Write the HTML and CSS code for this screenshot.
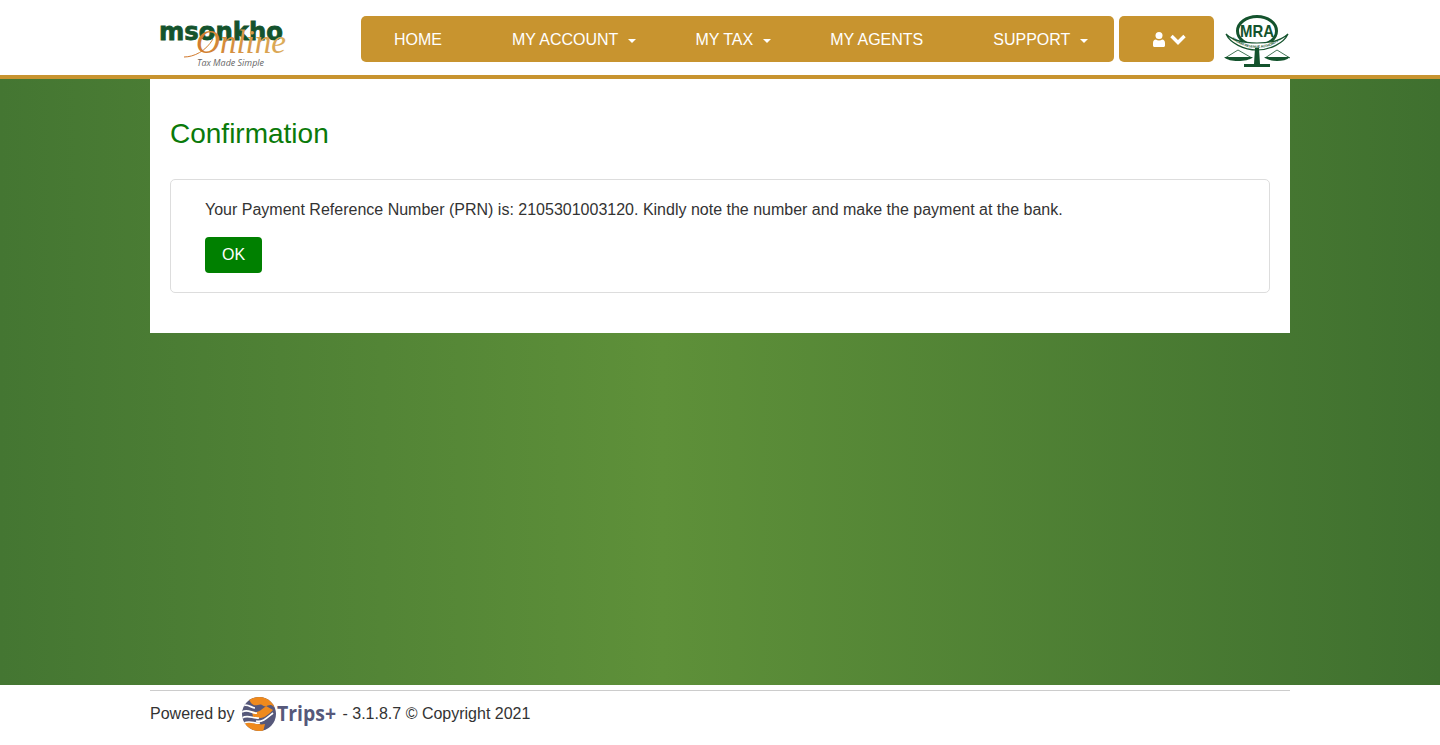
FILE: index.html
```html
<!DOCTYPE html>
<html lang="en">
<head>
  <meta charset="UTF-8" />
  <meta name="viewport" content="width=device-width, initial-scale=1.0" />
  <title>Msonkho Online</title>
  <link rel="stylesheet" href="styles.css">
</head>
<body>

  <!-- Header -->
  <header class="site-header">
    <div class="container header-row">
      <svg class="logo" width="140" height="56" viewBox="0 0 140 56" role="img" aria-label="msonkho Online">
        <defs>
          <linearGradient id="onlineFill" gradientUnits="userSpaceOnUse" x1="34" x2="137" y1="0" y2="0">
            <stop offset="0" stop-color="#cf7427"/>
            <stop offset="1" stop-color="#dcae5c"/>
          </linearGradient>
        </defs>
        <text x="9" y="25" class="logo-main" textLength="124" lengthAdjust="spacingAndGlyphs">msonkho</text>
        <path d="M34 42c10 0 22-6 29-18" fill="none" stroke="url(#onlineFill)" stroke-width="1"/>
        <text x="46" y="38" class="logo-script" textLength="90" lengthAdjust="spacingAndGlyphs" fill="url(#onlineFill)">Online</text>
        <text x="47" y="51" class="logo-tag" textLength="67" lengthAdjust="spacingAndGlyphs">Tax Made Simple</text>
      </svg>

      <nav class="main-nav">
        <a href="#" class="nav-home">HOME</a>
        <a href="#" class="nav-account">MY ACCOUNT<span class="caret"></span></a>
        <a href="#" class="nav-tax">MY TAX<span class="caret"></span></a>
        <a href="#" class="nav-agents">MY AGENTS</a>
        <a href="#" class="nav-support">SUPPORT<span class="caret"></span></a>
      </nav>

      <button class="user-btn" aria-label="User menu">
        <svg width="12" height="16" viewBox="0 0 12 16" fill="#fff">
          <circle cx="6" cy="4.500" r="3.500"/>
          <path d="M1.500 16C.6 16 0 15.400 0 14.500V12c0-2 1.200-3.500 2.800-3.500.9.7 2 1 3.200 1s2.300-.3 3.200-1C10.800 8.500 12 10 12 12v2.500c0 .9-.6 1.500-1.500 1.500z"/>
        </svg>
        <svg width="16" height="11" viewBox="0 0 16 11" fill="none" stroke="#fff" stroke-width="3.400">
          <path d="M1.500 2l6.500 6.500 6.500-6.500"/>
        </svg>
      </button>

      <svg class="mra-logo" width="66" height="52" viewBox="0 0 66 52" role="img" aria-label="MRA">
        <ellipse cx="33" cy="16" rx="19.500" ry="14.500" fill="none" stroke="#14532d" stroke-width="3"/>
        <text x="16" y="22" class="mra-text" textLength="34" lengthAdjust="spacingAndGlyphs">MRA</text>
        <path d="M2 19C6 28 20 35 33 35S60 28 64 19C58 25 46 28 33 28S8 25 2 19z" fill="#fff" stroke="#14532d" stroke-width="1.200"/>
        <path id="mraArc" d="M8 24C15 30 24 33 33 33S51 30 58 24" fill="none"/>
        <text class="mra-small"><textPath href="#mraArc" textLength="50">MALAWI REVENUE AUTHORITY</textPath></text>
        <path d="M1 43L14 35L28 43M41 43L53 35L66 43" fill="none" stroke="#14532d" stroke-width=".8"/>
        <path d="M0 42H29C26 45 20 46 14 46S3 45 0 42zM40 42H66C63 45 58 46 53 46S43 45 40 42z" fill="#14532d"/>
        <path d="M31 33h4l1 16h10v3H20v-3h10z" fill="#14532d"/>
      </svg>
    </div>
  </header>

  <!-- Isi halaman -->
  <main class="page-body">
    <section class="container content">
      <h2 class="page-title">Confirmation</h2>
      <div class="panel">
        <p class="panel-text">Your Payment Reference Number (PRN) is: 2105301003120. Kindly note the number and make the payment at the bank.</p>
        <button class="btn-ok">OK</button>
      </div>
    </section>
  </main>

  <!-- Footer -->
  <footer class="site-footer">
    <div class="container footer-row">
      <span>Powered by</span>
      <svg class="trips-logo" width="104" height="36" viewBox="0 0 104 36" role="img" aria-label="Trips+">
        <defs>
          <clipPath id="globeClip"><circle cx="17" cy="18" r="17"/></clipPath>
        </defs>
        <g clip-path="url(#globeClip)" fill="none" stroke="#fff" stroke-width="1.700">
          <rect width="36" height="36" fill="#56587a" stroke="none"/>
          <path d="M5 0H32V11C27 6 25 13 20 9 17 7 13 12 9 7z" fill="#ef8a1d" stroke="none"/>
          <path d="M10 15C15 18 19 14 24 10L31 14C26 19 20 25 11 21z" fill="#ef8a1d" stroke="none"/>
          <path d="M2 27C9 24 15 30 23 28L21 36H5z" fill="#ef8a1d" stroke="none"/>
          <path d="M0 10C6 7 9 12 13 12"/>
          <path d="M0 16C6 12 10 18 15 17"/>
          <path d="M0 22C6 18 11 23 17 22"/>
          <path d="M2 27C8 24 13 28 18 27"/>
          <path d="M14 25C20 27 26 21 31 17"/>
        </g>
        <text x="35" y="25" class="trips-text" textLength="59" lengthAdjust="spacingAndGlyphs">Trips+</text>
      </svg>
      <span>- 3.1.8.7 © Copyright 2021</span>
    </div>
  </footer>

</body>
</html>
```

FILE: styles.css
```css
* {
  box-sizing: border-box;
}

html, body {
  height: 100%;
}

body {
  margin: 0;
  display: flex;
  flex-direction: column;
  font-family: 'Liberation Sans', Arial, sans-serif;
  font-size: 16px;
  color: #333;
  background: #fff;
}

.container {
  width: 1140px;
  margin: 0 auto;
}

/* Header */
.site-header {
  height: 79px;
  background: #fff;
  border-bottom: 4px solid #c8942f;
  flex-shrink: 0;
}

.header-row {
  display: flex;
  align-items: flex-start;
  height: 75px;
}

.logo {
  margin-top: 15px;
  margin-right: 71px;
  flex-shrink: 0;
}

.logo-main {
  font-family: 'DejaVu Sans', sans-serif;
  font-size: 25px;
  font-weight: 700;
  fill: #14532d;
  stroke: #14532d;
  stroke-width: 0.8px;
}

.logo-script {
  font-family: 'Liberation Serif', serif;
  font-style: italic;
  font-size: 34px;
}

.logo-tag {
  font-family: 'Open Sans', sans-serif;
  font-style: italic;
  font-size: 9px;
  fill: #666;
}

.main-nav {
  display: flex;
  align-items: center;
  width: 753px;
  height: 46px;
  margin-top: 16px;
  padding-top: 2px;
  background: #c8942f;
  border-radius: 5px;
}

.main-nav a {
  color: #fff;
  text-decoration: none;
  white-space: nowrap;
}

.nav-home { margin-left: 33px; }
.nav-account { margin-left: 70px; }
.nav-tax { margin-left: 59px; }
.nav-agents { margin-left: 59px; }
.nav-support { margin-left: 70px; }

.caret {
  display: inline-block;
  width: 0;
  height: 0;
  margin-left: 10px;
  vertical-align: middle;
  border-top: 4px solid #fff;
  border-left: 4px solid transparent;
  border-right: 4px solid transparent;
}

.user-btn {
  display: flex;
  align-items: center;
  gap: 5px;
  width: 95px;
  height: 46px;
  margin-top: 16px;
  margin-left: 5px;
  padding: 0 0 0 34px;
  border: none;
  border-radius: 5px;
  background: #c8942f;
}

.mra-logo {
  margin-top: 15px;
  margin-left: 10px;
  flex-shrink: 0;
}

.mra-text {
  font-family: 'Liberation Sans', sans-serif;
  font-weight: 700;
  font-size: 17px;
  fill: #14532d;
}

.mra-small {
  font-family: 'Liberation Sans', sans-serif;
  font-weight: 700;
  font-size: 3.500px;
  fill: #14532d;
}

/* Isi halaman */
.page-body {
  flex: 1;
  background: linear-gradient(to right, #447632, #5e9039 46%, #3f702f);
}

.content {
  height: 254px;
  padding: 1px 20px 0;
  background: #fff;
}

.page-title {
  margin: 37px 0 29px;
  font-size: 28px;
  line-height: 33px;
  font-weight: normal;
  color: #0a7a0a;
}

.panel {
  height: 114px;
  padding: 20px 34px 0;
  background: #fff;
  border: 1px solid #ddd;
  border-radius: 5px;
}

.panel-text {
  margin: 0 0 17px;
  line-height: 20px;
}

.btn-ok {
  display: block;
  width: 57px;
  height: 36px;
  padding: 0;
  border: none;
  border-radius: 4px;
  background: #008000;
  color: #fff;
  font-family: inherit;
  font-size: 16px;
}

/* Footer */
.site-footer {
  height: 60px;
  padding-top: 5px;
  background: #fff;
  flex-shrink: 0;
}

.footer-row {
  display: flex;
  align-items: center;
  height: 47px;
  border-top: 1px solid #ccc;
}

.trips-logo {
  margin-left: 7px;
  margin-right: -3px;
  flex-shrink: 0;
}

.trips-text {
  font-family: 'Open Sans', sans-serif;
  font-weight: 700;
  font-size: 21px;
  fill: #56587a;
}
```
